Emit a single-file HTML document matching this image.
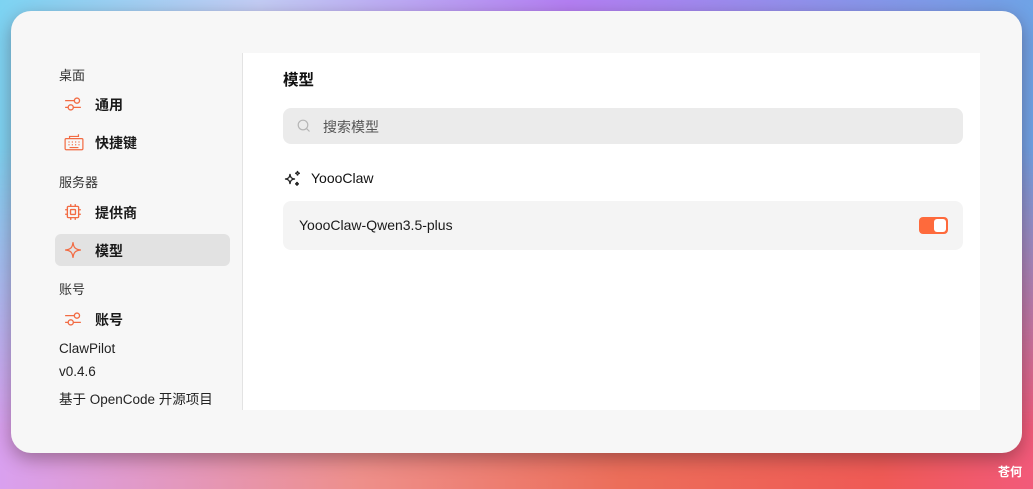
<!DOCTYPE html>
<html><head><meta charset="utf-8"><style>
*{margin:0;padding:0;box-sizing:border-box}
body{width:1033px;height:489px;overflow:hidden;position:relative;font-family:"Liberation Sans","Noto Sans CJK SC",sans-serif;
background:linear-gradient(90deg,#7dd3f2 0%,#c3cdf5 25%,#b47ff3 55%,#6fa3e6 100%);}
.bot{position:absolute;left:0;right:0;top:0;bottom:0;background:linear-gradient(90deg,#d9a0ef 0%,#ee8f8a 35%,#ec6e5a 60%,#ef5a55 85%,#f25a7a 100%);
-webkit-mask-image:linear-gradient(180deg,transparent 0%,transparent 30%,#000 88%);mask-image:linear-gradient(180deg,transparent 0%,transparent 30%,#000 88%)}
.win{position:absolute;left:11px;top:11px;width:1011px;height:442px;background:#f7f7f7;border-radius:20px;box-shadow:0 6px 18px rgba(60,30,40,.4)}
.sec{position:absolute;left:48px;font-size:13px;color:#333}
.item{position:absolute;left:44px;width:175px;height:32px;border-radius:6px;font-size:14px;color:#1a1a1a}
.item svg{position:absolute;left:9px;top:7px}
.item span{position:absolute;left:40px;top:7px;font-weight:600}
.sel{background:#e2e2e2}
.div{position:absolute;left:231px;top:42px;width:1px;height:357px;background:#e3e3e3}
.panel{position:absolute;left:232px;top:42px;width:737px;height:357px;background:#fff}
.foot{position:absolute;left:48px;font-size:13.5px;color:#222}
</style></head><body>
<div class="bot"></div>
<div class="win">
<div class="sec" style="top:54px">桌面</div>
<div class="item" style="top:77px"><svg width="18" height="18" viewBox="0 0 16 16" fill="none" stroke="#f26b43" stroke-width="1.2"><path d="M1 5h8M1 11h3M8 11h7"/><circle cx="11.5" cy="5" r="2.3"/><circle cx="6" cy="11" r="2.3"/></svg><span>通用</span></div>
<div class="item" style="top:115px"><svg width="20" height="18" viewBox="0 0 18 16" fill="none" stroke="#f26b43" stroke-width="1.1"><rect x="1" y="5" width="16" height="10" rx="1"/><path d="M5 5V3h8V1M4 8h1M7 8h1M10 8h1M13 8h1M4 10.5h1M7 10.5h1M10 10.5h1M13 10.5h1M5 13h8"/></svg><span>快捷键</span></div>
<div class="sec" style="top:161px">服务器</div>
<div class="item" style="top:185px"><svg width="18" height="18" viewBox="0 0 16 16" fill="none" stroke="#f26b43" stroke-width="1.2"><rect x="3" y="3" width="10" height="10" rx="1"/><rect x="5.8" y="5.8" width="4.4" height="4.4" rx=".5"/><path d="M6 1v2M10 1v2M6 13v2M10 13v2M1 6h2M1 10h2M13 6h2M13 10h2"/></svg><span>提供商</span></div>
<div class="item sel" style="top:223px"><svg width="18" height="18" viewBox="0 0 16 16" fill="none" stroke="#f26b43" stroke-width="1.1"><path d="M8 1C8.5 6 10 7.5 15 8 10 8.5 8.5 10 8 15 7.5 10 6 8.5 1 8 6 7.5 7.5 6 8 1Z"/></svg><span>模型</span></div>
<div class="sec" style="top:268px">账号</div>
<div class="item" style="top:292px"><svg width="18" height="18" viewBox="0 0 16 16" fill="none" stroke="#f26b43" stroke-width="1.2"><path d="M1 5h8M1 11h3M8 11h7"/><circle cx="11.5" cy="5" r="2.3"/><circle cx="6" cy="11" r="2.3"/></svg><span>账号</span></div>
<div class="foot" style="top:330px">ClawPilot</div>
<div class="foot" style="top:353px">v0.4.6</div>
<div class="foot" style="top:377px">基于 OpenCode 开源项目</div>
<div class="div"></div>
<div class="panel">
 <div style="position:absolute;left:40px;top:15px;font-size:15.5px;font-weight:600;color:#111">模型</div>
 <div style="position:absolute;left:40px;top:55px;width:680px;height:36px;background:#ebebeb;border-radius:8px">
  <svg style="position:absolute;left:14px;top:11px" width="14" height="14" viewBox="0 0 14 14" fill="none" stroke="#b5b5b5" stroke-width="1.2"><circle cx="6" cy="6" r="4.8"/><path d="M9.5 9.5l3 3"/></svg>
  <div style="position:absolute;left:40px;top:9px;font-size:14px;color:#555">搜索模型</div>
 </div>
 <svg style="position:absolute;left:40px;top:116px" width="20" height="20" viewBox="0 0 20 20" fill="none" stroke="#222" stroke-width="1.3"><path d="M7 5C7.4 8.6 8.4 9.6 12 10 8.4 10.4 7.4 11.4 7 15 6.6 11.4 5.6 10.4 2 10 5.6 9.6 6.6 8.6 7 5Z"/><path d="M14.5 2c.2 1.6.7 2.1 2.3 2.3-1.6.2-2.1.7-2.3 2.3-.2-1.6-.7-2.1-2.3-2.3 1.6-.2 2.1-.7 2.3-2.3ZM14 13c.2 1.3.6 1.7 1.8 1.8-1.2.2-1.6.6-1.8 1.8-.2-1.2-.6-1.6-1.8-1.8 1.2-.1 1.6-.5 1.8-1.8Z"/></svg>
 <div style="position:absolute;left:68px;top:117px;font-size:14px;color:#111">YoooClaw</div>
 <div style="position:absolute;left:40px;top:148px;width:680px;height:49px;background:#f4f4f4;border-radius:8px">
  <div style="position:absolute;left:16px;top:16px;font-size:14px;color:#1a1a1a">YoooClaw-Qwen3.5-plus</div>
  <div style="position:absolute;left:636px;top:16px;width:29px;height:17px;background:#fe6a3c;border-radius:4px"><div style="position:absolute;right:2px;top:2px;width:12px;height:13px;background:#fff;border-radius:3px"></div></div>
 </div>
</div>
</div>
<div style="position:absolute;left:998px;top:463px;font-size:12px;color:#fff;font-weight:bold">苍何</div>
</body></html>
